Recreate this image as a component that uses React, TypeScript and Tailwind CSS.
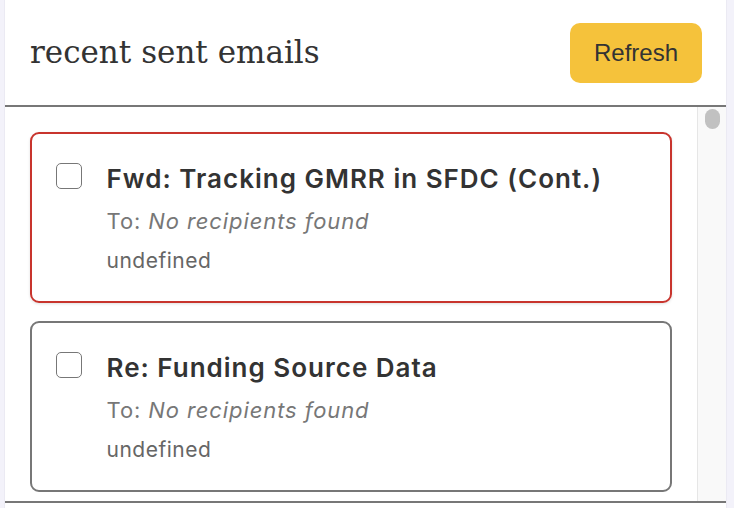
import React from "react";

const emails = [
  { subject: "Fwd: Tracking GMRR in SFDC (Cont.)", active: true },
  { subject: "Re: Funding Source Data", active: false },
];

export default function App() {
  return (
    <div className="w-[734px] h-[508px] flex bg-white overflow-hidden">
      <div className="w-[5px] bg-[#f3f2fa] border-r border-[#ebeaf3]" />
      <div className="w-[721px] flex flex-col">
        <div className="h-[107px] flex items-center justify-between pl-[25px] pr-[24px] border-b-2 border-[#777]">
          <h1
            className="text-[31px] text-[#333] leading-none"
            style={{ fontFamily: '"DejaVu Serif", "Liberation Serif", serif' }}
          >
            recent sent emails
          </h1>
          <button
            className="w-[132px] h-[60px] rounded-[10px] bg-[#f5c23b] text-[24px] text-[#333]"
            style={{ fontFamily: '"Liberation Sans", Arial, sans-serif' }}
          >
            Refresh
          </button>
        </div>
        <div className="h-[396px] flex border-b-2 border-[#777]">
          <div
            className="flex-1 flex flex-col gap-[18px] pt-[25px] pl-[25px] pr-[25px]"
            style={{ fontFamily: 'Inter, "Liberation Sans", sans-serif' }}
          >
            {emails.map((e) => (
              <div
                key={e.subject}
                className={`h-[171px] rounded-[9px] border-2 flex pt-[28.5px] pl-[23.5px] ${
                  e.active ? "border-[#c8342d] shadow-[0_1px_3px_rgba(0,0,0,0.12)]" : "border-[#777]"
                }`}
              >
                <div className="w-[26px] h-[26px] rounded-[5px] border-[1.5px] border-[#777] bg-white shrink-0" />
                <div className="ml-[25px] flex flex-col">
                  <div className="text-[26px] tracking-[1px] font-semibold text-[#333] leading-[32px]">
                    {e.subject}
                  </div>
                  <div className="text-[22px] tracking-[0.9px] text-[#777] leading-[28px] mt-[12.5px]">
                    To: <span className="italic">No recipients found</span>
                  </div>
                  <div className="text-[21px] tracking-[0.5px] text-[#666] leading-[26px] mt-[12.7px]">
                    undefined
                  </div>
                </div>
              </div>
            ))}
          </div>
          <div className="w-[29px] bg-[#f9f9f9] border-l border-[#e6e6e6] flex justify-center pt-[2px]">
            <div className="w-[15px] h-[20px] rounded-full bg-[#c1c1c1]" />
          </div>
        </div>
      </div>
      <div className="flex-1 bg-[#f3f2fa] border-l border-[#ebeaf3]" />
    </div>
  );
}
